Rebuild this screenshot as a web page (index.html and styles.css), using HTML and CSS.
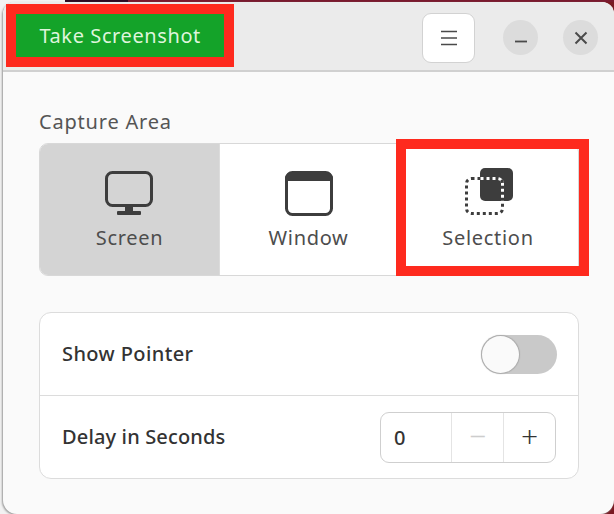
FILE: index.html

```html
<!DOCTYPE html>
<html lang="en">
<head>
  <meta charset="UTF-8" />
  <meta name="viewport" content="width=device-width, initial-scale=1.0"/>
  <title>Screenshot</title>
  <link rel="stylesheet" href="styles.css">
</head>
<body>
  <div class="window">
    <header class="titlebar">
      <button class="take-btn">Take Screenshot</button>
      <button class="menu-btn" aria-label="Menu">
        <svg width="16" height="16" viewBox="0 0 16 16"><path d="M0 1.500h16M0 8h16M0 14.500h16" stroke="#4a4a4a" stroke-width="1.600" fill="none"/></svg>
      </button>
      <button class="round-btn min-btn" aria-label="Minimize">
        <svg width="14" height="14" viewBox="0 0 14 14"><path d="M1 10.500h12" stroke="#4a4a4a" stroke-width="1.800" fill="none"/></svg>
      </button>
      <button class="round-btn" aria-label="Close">
        <svg width="14" height="14" viewBox="0 0 14 14"><path d="M1.500 1.500l11 11M12.500 1.500l-11 11" stroke="#4a4a4a" stroke-width="2" fill="none"/></svg>
      </button>
    </header>

    <main class="content">
      <h2 class="section-title">Capture Area</h2>
      <div class="area-group">
        <button class="area-btn active">
          <svg width="48" height="46" viewBox="0 0 48 46">
            <rect x="1.500" y="1.500" width="45" height="33" rx="6" fill="none" stroke="#3d3d3d" stroke-width="3"/>
            <path d="M20 35h8v5h-8z" fill="#3d3d3d"/>
            <rect x="12" y="40" width="24" height="4" rx="1" fill="#3d3d3d"/>
          </svg>
          <span>Screen</span>
        </button>
        <button class="area-btn">
          <svg width="48" height="46" viewBox="0 0 48 46">
            <rect x="1.500" y="1.500" width="45" height="42" rx="6" fill="none" stroke="#3d3d3d" stroke-width="3"/>
            <path d="M0 9a7 7 0 0 1 7-8h34a7 7 0 0 1 7 8v1H0z" fill="#3d3d3d"/>
          </svg>
          <span>Window</span>
        </button>
        <button class="area-btn selection">
          <svg width="48" height="47" viewBox="0 0 48 47">
            <rect x="15" y="0" width="33" height="33" rx="5" fill="#3d3d3d"/>
            <rect x="1.500" y="10.500" width="36" height="35" rx="5" fill="none" stroke="#fff" stroke-width="3"/>
            <rect x="1.500" y="10.500" width="36" height="35" rx="5" fill="none" stroke="#3d3d3d" stroke-width="3" stroke-dasharray="3 3"/>
          </svg>
          <span>Selection</span>
          <i class="highlight"></i>
        </button>
      </div>

      <div class="card">
        <div class="row">
          <span class="pointer-label">Show Pointer</span>
          <div class="toggle"><div class="knob"></div></div>
        </div>
        <div class="row">
          <span>Delay in Seconds</span>
          <div class="spin">
            <div class="spin-value">0</div>
            <div class="spin-btn off">&minus;</div>
            <div class="spin-btn">+</div>
          </div>
        </div>
      </div>
    </main>
  </div>
</body>
</html>
```

FILE: styles.css

```css
html, body {
  height: 100%;
}
body {
  margin: 0;
  padding: 2px 0 0 3px;
  box-sizing: border-box;
  overflow: hidden;
  background:
    linear-gradient(to right, #f2f2f2 65px, #2b0a22 65px, #2b0a22 128px, #7a1a2e 128px) top / 100% 2px no-repeat,
    linear-gradient(to right, #f2f2f2 20px, #7a1a22 20px);
  font-family: "Noto Sans", sans-serif;
  font-size: 20px;
  color: #3d3d3d;
}
button {
  font: inherit;
  color: inherit;
  padding: 0;
  border: none;
  background: none;
}
.window {
  height: 512px;
  display: flex;
  flex-direction: column;
  background: #fafafa;
  border-radius: 12px 12px 14px 14px;
  box-shadow: -1px 1px 2px #9a9a9a;
}
.titlebar {
  height: 70px;
  flex: none;
  box-sizing: border-box;
  display: flex;
  align-items: flex-start;
  padding: 2px 16px 0 3px;
  background: #ebebeb;
  border-bottom: 2px solid #d0d0d0;
  border-radius: 12px 12px 0 0;
}
.take-btn {
  width: 229px;
  height: 63px;
  box-sizing: border-box;
  border: 10px solid #fe2a1e;
  background: #14a329;
  color: #dff5dc;
  letter-spacing: 0.6px;
}
.menu-btn {
  width: 53px;
  height: 50px;
  margin: 9px 28px 0 188px;
  display: flex;
  align-items: center;
  justify-content: center;
  box-sizing: border-box;
  background: #fff;
  border: 1px solid #d2d2d2;
  border-radius: 9px;
}
.round-btn {
  width: 35px;
  height: 35px;
  margin-top: 16px;
  display: flex;
  align-items: center;
  justify-content: center;
  background: #dcdcdc;
  border-radius: 50%;
}
.min-btn {
  margin-right: 25px;
}
.content {
  padding: 37px 35px 0 36px;
}
.section-title {
  margin: 0 0 8px;
  font-size: 20px;
  font-weight: 400;
  line-height: 26px;
  color: #555;
  letter-spacing: 0.8px;
}
.area-group {
  display: flex;
  height: 133px;
  box-sizing: border-box;
  border: 1px solid #d8d8d8;
  border-radius: 9px;
  background: #fff;
}
.area-btn {
  position: relative;
  width: 178px;
  display: flex;
  flex-direction: column;
  align-items: center;
  padding-top: 27px;
  border-right: 1px solid #dcdcdc;
  color: #4d4d4d;
  letter-spacing: 0.7px;
}
.area-btn span {
  margin-top: 7px;
  line-height: 28px;
}
.area-btn.active {
  width: 180px;
  background: #d4d4d4;
  border-radius: 8px 0 0 8px;
}
.area-btn.active svg {
  margin-left: -2px;
}
.area-btn.selection {
  flex: 1;
  border-right: none;
  padding-top: 24px;
}
.area-btn.selection svg {
  margin-left: 2px;
}
.area-btn.selection span {
  margin-top: 9px;
}
.highlight {
  position: absolute;
  top: -5px;
  left: -2px;
  right: -11px;
  bottom: -1px;
  border: 10px solid #fe2a1e;
}
.card {
  margin-top: 36px;
  border: 1px solid #dcdcdc;
  border-radius: 12px;
  background: #fff;
}
.row {
  height: 82px;
  display: flex;
  align-items: center;
  justify-content: space-between;
  padding: 0 21px 0 22px;
  color: #333;
  font-weight: 500;
}
.row > span {
  margin-top: -2px;
  letter-spacing: 0.15px;
}
.row > .pointer-label {
  letter-spacing: 0.4px;
}
.row + .row {
  border-top: 1px solid #dcdcdc;
}
.toggle {
  width: 76px;
  height: 39px;
  display: flex;
  background: #c9c9c9;
  border-radius: 20px;
}
.knob {
  width: 37px;
  height: 37px;
  margin: 1px;
  background: #fafafa;
  border-radius: 50%;
  box-shadow: 0 0 1px 1px #aaa;
}
.spin {
  width: 176px;
  height: 51px;
  margin-right: 1px;
  box-sizing: border-box;
  display: flex;
  border: 1px solid #cfcfcf;
  border-radius: 9px;
}
.spin-value {
  width: 70px;
  padding-left: 13px;
  box-sizing: border-box;
  line-height: 49px;
}
.spin-btn {
  flex: 1;
  text-align: center;
  font-size: 30px;
  font-weight: 300;
  line-height: 46px;
  border-left: 1px solid #e4e4e4;
}
.spin-btn.off {
  color: #cdcdcd;
}
```
